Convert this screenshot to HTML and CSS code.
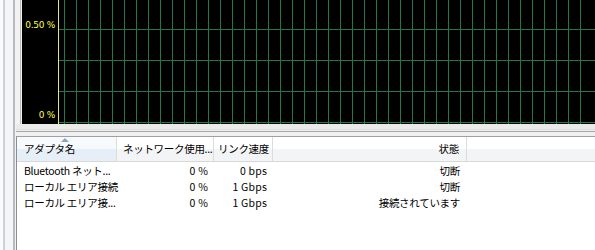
FILE: index.html
```html
<!DOCTYPE html>
<html lang="ja">
<head>
    <meta charset="UTF-8">
    <title>ネットワーク</title>
    <link rel="stylesheet" href="styles.css">
</head>
<body>
    <div class="edge"></div>
    <div class="content">
        <div class="graph-area">
            <div class="graph">
                <div class="scale">
                    <span class="scale-label top">0.50 %</span>
                    <span class="scale-label bottom">0 %</span>
                </div>
                <div class="plot"></div>
            </div>
        </div>
        <div class="strip"></div>
        <div class="list">
            <div class="row header">
                <div class="cell c1 left sorted">アダプタ名<span class="sort-arrow"></span></div>
                <div class="cell c2">ネットワーク使用...</div>
                <div class="cell c3 left">リンク速度</div>
                <div class="cell c4">状態</div>
                <div class="cell c5"></div>
            </div>
            <div class="row">
                <div class="cell c1 left">Bluetooth ネット...</div>
                <div class="cell c2">0 %</div>
                <div class="cell c3">0 bps</div>
                <div class="cell c4">切断</div>
            </div>
            <div class="row">
                <div class="cell c1 left">ローカル エリア接続</div>
                <div class="cell c2">0 %</div>
                <div class="cell c3">1 Gbps</div>
                <div class="cell c4">切断</div>
            </div>
            <div class="row">
                <div class="cell c1 left">ローカル エリア接...</div>
                <div class="cell c2">0 %</div>
                <div class="cell c3">1 Gbps</div>
                <div class="cell c4">接続されています</div>
            </div>
        </div>
    </div>
</body>
</html>
```

FILE: styles.css
```css
body {
    margin: 0;
    width: 595px;
    height: 250px;
    overflow: hidden;
    display: flex;
    background-color: #f0f0f0;
    font-family: "Noto Sans CJK JP", "DejaVu Sans", sans-serif;
    font-size: 10.5px;
    letter-spacing: -0.3px;
    color: #000;
}
.edge {
    width: 16px;
    flex: none;
    background: linear-gradient(to right,
        #fbfbfb 0 3px, #c9d2de 3px 5px, #f4f5f7 5px 13px,
        #b4bcc8 13px 15px, #f2f2f2 15px 16px);
}
.content {
    flex: 1;
    display: flex;
    flex-direction: column;
}
.graph-area {
    height: 124px;
    padding-left: 6px;
    background: linear-gradient(to right, #f2f2f2 0 4px, #b8b8b8 4px 5px, #f2f2f2 5px);
}
.graph {
    height: 124px;
    display: flex;
    background-color: #000;
}
.scale {
    width: 36px;
    position: relative;
}
.scale-label {
    position: absolute;
    right: 3px;
    color: #ffff40;
    font-family: "DejaVu Sans", sans-serif;
    font-size: 9px;
    letter-spacing: -0.3px;
}
.scale-label.top {
    top: 20px;
}
.scale-label.bottom {
    top: 110px;
}
.plot {
    flex: 1;
    border-left: 1px solid #e8e87a;
    background-image:
        repeating-linear-gradient(to right, transparent 0 11px, #22784a 11px 12px),
        repeating-linear-gradient(to bottom, transparent 0 30px, #22784a 30px 31px);
    background-position: -6px 0, 0 -1px;
}
.strip {
    height: 12px;
    background: linear-gradient(to bottom, #ebebeb 0 5px, #dedede 5px 6px, #f0f0f0 6px 7px, #a5a5a5 7px 8px, #f0f0f0 8px);
}
.list {
    flex: 1;
    background-color: #fff;
    border-top: 1px solid #a0a0a0;
    border-left: 1px solid #8a8e94;
}
.row {
    display: flex;
    height: 16px;
    line-height: 16px;
}
.row:nth-child(2) {
    margin-top: 1px;
}
.header {
    height: 24px;
    line-height: 24px;
    background: linear-gradient(to bottom, #ffffff 0 50%, #f3f4f5 50% 100%);
    border-bottom: 1px solid #d8d8d8;
}
.cell {
    flex: none;
    box-sizing: border-box;
    padding: 0 6px;
    text-align: right;
    white-space: nowrap;
}
.cell.left {
    text-align: left;
}
.header .cell {
    border-right: 1px solid #dcdcdc;
    overflow: hidden;
}
.header .c1 {
    padding-left: 6px;
}
.row .c1 {
    padding-left: 7px;
}
.c1 {
    width: 100px;
    position: relative;
}
.c2 {
    width: 97px;
}
.header .c2 {
    padding: 0 3px 0 6px;
}
.c3 {
    width: 59px;
}
.row:not(.header) .c2,
.row:not(.header) .c3 {
    letter-spacing: 0.2px;
}
.header .c3 {
    padding-left: 4px;
}
.c4 {
    width: 194px;
    padding-right: 7px;
}
.header .c5 {
    flex: 1;
    border-right: none;
}
.header .sorted {
    background: linear-gradient(to bottom, #f6fafd 0 50%, #e6eff7 50% 100%);
}
.sort-arrow {
    position: absolute;
    left: 44px;
    top: 1px;
    width: 0;
    height: 0;
    border-left: 4px solid transparent;
    border-right: 4px solid transparent;
    border-bottom: 4px solid #8fa4bb;
}
```
